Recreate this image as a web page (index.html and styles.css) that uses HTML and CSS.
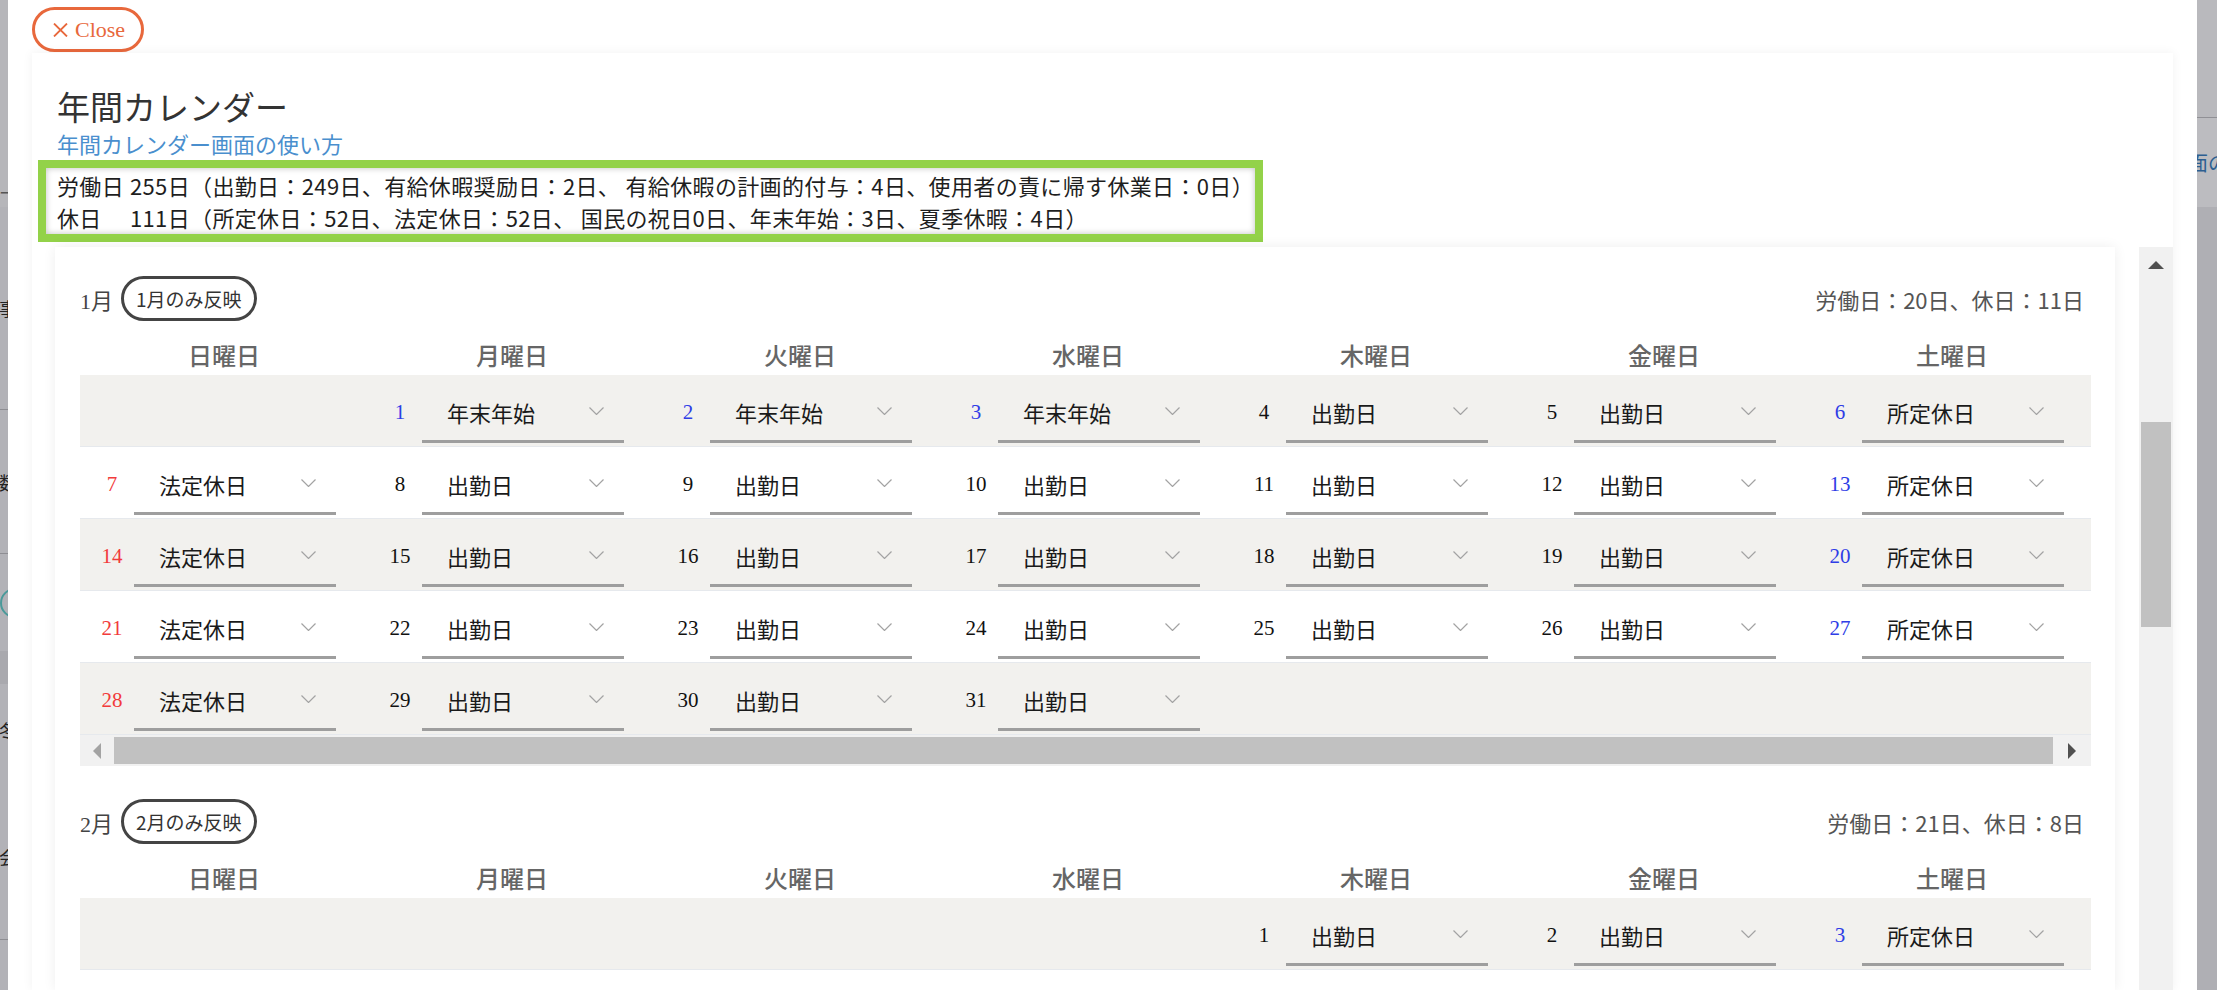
FILE: index.html
```html
<!DOCTYPE html>
<html lang="ja">
<head>
    <meta charset="UTF-8">
    <meta name="viewport" content="width=device-width, initial-scale=1.0">
    <title>年間カレンダー</title>
    <link rel="stylesheet" href="styles.css">
</head>
<body>
    <!-- 背景ページ（モーダルの外側） -->
    <div class="bg-left">
        <div class="bl-top"><span>ー</span></div>
        <div class="bl-item bl-a"><span>事</span></div>
        <div class="bl-item bl-b"><span>数</span></div>
        <div class="bl-item bl-c"><span class="ring"></span></div>
        <div class="bl-band"></div>
        <div class="bl-item bl-d"><span>冬</span></div>
        <div class="bl-item bl-e"><span>会</span></div>
        <div class="bl-rest"></div>
    </div>

    <div class="modal">
        <button class="close-btn">
            <svg width="15" height="14" viewBox="0 0 15 14"><path d="M1 0.5 L14 13.5 M14 0.5 L1 13.5" stroke="#e8683c" stroke-width="1.8" fill="none"/></svg>
            Close
        </button>

        <div class="card">
            <h1 class="title">年間カレンダー</h1>
            <a class="help-link" href="#">年間カレンダー画面の使い方</a>

            <div class="summary">
                <p><span class="label">労働日</span>255日（出勤日：249日、有給休暇奨励日：2日、 有給休暇の計画的付与：4日、使用者の責に帰す休業日：0日）</p>
                <p><span class="label">休日</span>111日（所定休日：52日、法定休日：52日、 国民の祝日0日、年末年始：3日、夏季休暇：4日）</p>
            </div>

            <div class="calendar-area">
                <div class="months" id="months"></div>
                <div class="vscroll">
                    <div class="up"><span class="tri-up"></span></div>
                    <div class="track-gap"></div>
                    <div class="thumb"></div>
                </div>
            </div>
        </div>
    </div>

    <div class="bg-right">
        <div class="br-top"></div>
        <div class="br-mid"><span>面の</span></div>
        <div class="br-rest"></div>
    </div>

    <script>
        const weekdays = ['日曜日', '月曜日', '火曜日', '水曜日', '木曜日', '金曜日', '土曜日'];

        // shownRows: 画面に見えている週だけ描画する
        const months = [
            { name: '1月', stats: '労働日：20日、休日：11日', first: 1, days: 31,
              special: { 1: '年末年始', 2: '年末年始', 3: '年末年始' }, hscroll: true, shownRows: 5 },
            { name: '2月', stats: '労働日：21日、休日：8日', first: 4, days: 28, special: {}, shownRows: 1 }
        ];

        const chevron = '<svg class="chev" width="15" height="8" viewBox="0 0 15 8"><polyline points="0.5,0.5 7.5,7.5 14.5,0.5" stroke="#a3a3a3" stroke-width="1.2" fill="none"/></svg>';

        const container = document.getElementById('months');

        months.forEach(m => {
            const section = document.createElement('section');
            section.className = 'month';

            let html = '<div class="month-head">'
                + '<span class="month-name">' + m.name + '</span>'
                + '<button class="month-btn">' + m.name + 'のみ反映</button>'
                + '<span class="month-stats">' + m.stats + '</span>'
                + '</div>';

            html += '<div class="week-head">' + weekdays.map(w => '<span>' + w + '</span>').join('') + '</div>';

            html += '<div class="table-wrap">';
            for (let r = 0; r < m.shownRows; r++) {
                html += '<div class="week-row">';
                for (let c = 0; c < 7; c++) {
                    const d = r * 7 + c - m.first + 1;
                    if (d < 1 || d > m.days) {
                        html += '<div class="day"></div>';
                        continue;
                    }
                    let type = '出勤日';
                    let cls = '';
                    if (m.special[d]) { type = m.special[d]; cls = 'hol'; }
                    else if (c === 0) { type = '法定休日'; cls = 'sun'; }
                    else if (c === 6) { type = '所定休日'; cls = 'hol'; }
                    html += '<div class="day"><span class="num ' + cls + '">' + d + '</span>'
                        + '<div class="select"><span>' + type + '</span>' + chevron + '</div></div>';
                }
                html += '</div>';
            }
            html += '</div>';

            // 横スクロールバー
            if (m.hscroll) {
                html += '<div class="hscroll"><div class="arrow"><span class="tri-left"></span></div>'
                    + '<div class="thumb"></div>'
                    + '<div class="arrow right"><span class="tri-right"></span></div></div>';
            }

            section.innerHTML = html;
            container.appendChild(section);
        });
    </script>
</body>
</html>
```

FILE: styles.css
```css
* {
    margin: 0;
    padding: 0;
    box-sizing: border-box;
}

body {
    width: 2217px;
    height: 990px;
    overflow: hidden;
    display: flex;
    background: #b2b2b7;
    font-family: "Noto Sans CJK JP", sans-serif;
    color: #222;
}

/* 背景ページの切れ端 */
.bg-left {
    width: 8px;
    overflow: hidden;
    display: flex;
    flex-direction: column;
    color: #222;
    font-size: 18px;
}

.bg-left > div {
    display: flex;
    align-items: center;
    justify-content: flex-end;
    flex-shrink: 0;
}

.bg-left span {
    margin-right: -9px;
}

.bl-top {
    height: 207px;
    background: #b6b6ba;
    align-items: flex-end !important;
    padding-bottom: 2px;
    color: #555;
}

.bl-item {
    background: #b2b2b7;
    border-bottom: 1px solid #8e8e93;
}

.bl-a { height: 203px; }
.bl-b { height: 144px; }
.bl-c { height: 97px; border-bottom: none !important; }
.bl-band { height: 33px; background: #a9a9ae; }
.bl-d { height: 91px; border-bottom: none !important; }
.bl-e { height: 165px; }
.bl-rest { height: 60px; background: #b2b2b7; }

.ring {
    width: 30px;
    height: 30px;
    border: 2px solid #4a9a9a;
    border-radius: 50%;
    margin-right: -22px !important;
}

.bg-right {
    flex: 1;
    overflow: hidden;
    display: flex;
    flex-direction: column;
}

.br-top {
    height: 118px;
    background: #b9b9bd;
    border-bottom: 1px solid #909095;
}

.br-mid {
    height: 89px;
    background: #bcbcc0;
    display: flex;
    align-items: center;
    font-size: 20px;
    color: #2d5f91;
    white-space: nowrap;
}

.br-mid span {
    margin-left: -9px;
}

.br-rest {
    flex: 1;
    background: #afafb4;
}

/* モーダル */
.modal {
    width: 2189px;
    background: #fff;
    padding: 7px 24px 0;
    display: flex;
    flex-direction: column;
}

.close-btn {
    align-self: flex-start;
    display: flex;
    align-items: center;
    gap: 7px;
    width: 112px;
    height: 45px;
    padding-left: 18px;
    border: 3px solid #e8683c;
    border-radius: 23px;
    background: #fff;
    color: #e8683c;
    font-family: "Liberation Serif", serif;
    font-size: 22px;
    cursor: pointer;
}

.card {
    flex: 1;
    min-height: 0;
    margin-top: 1px;
    padding: 33px 0 0 25px;
    box-shadow: 0 0 10px rgba(0, 0, 0, 0.06);
    display: flex;
    flex-direction: column;
}

.title {
    font-size: 33px;
    font-weight: 400;
    line-height: 40px;
    color: #333;
}

.help-link {
    align-self: flex-start;
    margin-top: 4px;
    font-size: 22px;
    line-height: 26px;
    color: #4a8fce;
    text-decoration: none;
}

.summary {
    width: 1225px;
    height: 82px;
    margin: 4px 0 0 -19px;
    padding: 1px 0 0 11px;
    border: 8px solid #93d249;
    box-shadow: inset 0 0 6px rgba(0, 0, 0, 0.25);
    font-size: 22px;
    line-height: 32px;
    letter-spacing: 0.35px;
    color: #1e1e1e;
    white-space: nowrap;
}

.label {
    display: inline-block;
    width: 73px;
}

/* カレンダー部分 */
.calendar-area {
    flex: 1;
    min-height: 0;
    margin: 5px 0 0 -2px;
    display: flex;
    gap: 24px;
}

.months {
    flex: 1;
    min-width: 0;
    background: #fff;
    box-shadow: 0 0 12px rgba(0, 0, 0, 0.07);
    padding: 29px 24px 0 25px;
    overflow: hidden;
}

.month + .month {
    margin-top: 33px;
}

.month-head {
    display: flex;
    align-items: center;
    height: 45px;
}

.month-name {
    font-family: "Liberation Serif", "Noto Sans CJK JP", serif;
    font-size: 22px;
    color: #444;
}

.month-btn {
    margin-left: 8px;
    height: 45px;
    padding: 0 12px;
    border: 3px solid #444;
    border-radius: 23px;
    background: #fff;
    font-family: "Noto Sans CJK JP", sans-serif;
    font-size: 19px;
    color: #333;
}

.month-stats {
    margin-left: auto;
    margin-right: 7px;
    font-size: 22px;
    color: #555;
}

.week-head {
    display: grid;
    grid-template-columns: repeat(7, 288px);
    height: 42px;
    margin-top: 12px;
    align-items: center;
}

.week-head span {
    text-align: center;
    font-size: 24px;
    font-weight: 500;
    color: #666;
}

.table-wrap {
    overflow: hidden;
}

.week-row {
    display: grid;
    grid-template-columns: repeat(7, 288px);
    height: 72px;
    border-bottom: 1px solid #e6e9ed;
}

.week-row:nth-child(odd) {
    background: #f2f1ee;
}

.day {
    display: flex;
    align-items: flex-start;
    padding-top: 20px;
}

.num {
    width: 44px;
    margin-left: 10px;
    text-align: center;
    line-height: 35px;
    font-family: "Liberation Serif", serif;
    font-size: 21px;
    color: #111;
}

.num.sun {
    color: #f23b3b;
}

.num.hol {
    color: #2f3de6;
}

.select {
    width: 202px;
    height: 48px;
    display: flex;
    align-items: center;
    justify-content: space-between;
    padding: 0 20px 10px 25px;
    border-bottom: 3px solid #9e9e9e;
    font-size: 22px;
    line-height: 35px;
    color: #1a1a1a;
}

.chev {
    margin-bottom: 4px;
}

.hscroll {
    display: flex;
    height: 31px;
    background: #f1f1f1;
}

.hscroll .arrow {
    width: 34px;
    display: flex;
    align-items: center;
    justify-content: center;
}

.hscroll .arrow.right {
    width: 38px;
}

.hscroll .thumb {
    flex: 1;
    margin: 2px 0;
    background: #c1c1c1;
}

.tri-left {
    border-top: 8px solid transparent;
    border-bottom: 8px solid transparent;
    border-right: 8px solid #a3a3a3;
}

.tri-right {
    border-top: 8px solid transparent;
    border-bottom: 8px solid transparent;
    border-left: 8px solid #505050;
}

.vscroll {
    width: 34px;
    background: #f1f1f1;
    display: flex;
    flex-direction: column;
}

.vscroll .up {
    height: 36px;
    display: flex;
    align-items: center;
    justify-content: center;
}

.tri-up {
    border-left: 8px solid transparent;
    border-right: 8px solid transparent;
    border-bottom: 8px solid #505050;
}

.vscroll .track-gap {
    height: 139px;
}

.vscroll .thumb {
    height: 205px;
    margin: 0 2px;
    background: #c1c1c1;
}
```
